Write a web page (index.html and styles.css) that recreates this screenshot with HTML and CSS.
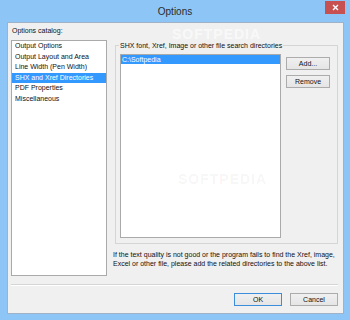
FILE: index.html
```html
<!DOCTYPE html>
<html>
<head>
<meta charset="utf-8">
<link rel="stylesheet" href="styles.css">
</head>
<body>
<div class="window">
  <div class="titlebar">
    <span></span>
    <span class="title">Options</span>
    <span class="close-wrap"><span class="close"><svg width="7" height="7" viewBox="0 0 7 7"><path d="M1 1L6 6M6 1L1 6" stroke="#fff" stroke-width="1.4"/></svg></span></span>
  </div>
  <div class="client">
    <div class="main">
      <div class="leftcol">
        <div class="label">Options catalog:</div>
        <ul class="catalog">
          <li>Output Options</li>
          <li>Output Layout and Area</li>
          <li>Line Width (Pen Width)</li>
          <li class="sel">SHX and Xref Directories</li>
          <li>PDF Properties</li>
          <li>Miscellaneous</li>
        </ul>
      </div>
      <div class="rightcol">
        <fieldset class="group">
          <legend>SHX font, Xref, Image or other file search directories</legend>
          <div class="grouprow">
            <ul class="dirs">
              <li class="sel">C:\Softpedia</li>
            </ul>
            <div class="sidebtns">
              <button class="btn side">Add...</button>
              <button class="btn side">Remove</button>
            </div>
          </div>
        </fieldset>
        <p class="desc">If the text quality is not good or the program fails to find the Xref, image, Excel or other file, please add the related directories to the above list.</p>
      </div>
    </div>
    <div class="sep"></div>
    <div class="footer">
      <button class="btn foot default">OK</button>
      <button class="btn foot">Cancel</button>
    </div>
    <div class="wm wm1">SOFTPEDIA</div>
    <div class="wm wm2">SOFTPEDIA</div>
  </div>
</div>
</body>
</html>
```

FILE: styles.css
```css
html, body {
  margin: 0;
  padding: 0;
}
body {
  width: 350px;
  height: 320px;
  background: #8dc6f6;
  font-family: "Liberation Sans", Arial, sans-serif;
  font-size: 7px;
  color: #111;
  overflow: hidden;
}
.window {
  display: flex;
  flex-direction: column;
  height: 320px;
}
.titlebar {
  height: 22px;
  display: grid;
  grid-template-columns: 1fr auto 1fr;
  align-items: start;
}
.title {
  font-size: 10px;
  color: #2b2b2b;
  line-height: 22px;
  margin-top: 1px;
}
.close-wrap {
  display: flex;
  justify-content: flex-end;
  padding-right: 5px;
  padding-top: 1px;
}
.close {
  width: 20px;
  height: 13px;
  background: #c75050;
  display: flex;
  align-items: center;
  justify-content: center;
}
.close svg { display: block; }
.client {
  position: relative;
  flex: 1;
  margin: 0 6px 6px 7px;
  background: #f0f0f0;
  border: 1px solid #9fb2c6;
  padding: 3px 5px 6px 3px;
  display: flex;
  flex-direction: column;
}
.main {
  display: flex;
  gap: 6px;
}
.leftcol {
  width: 96px;
  display: flex;
  flex-direction: column;
}
.label {
  line-height: 9px;
  padding-left: 1px;
  margin-bottom: 5px;
}
ul {
  list-style: none;
  margin: 0;
  padding: 0;
  background: #fff;
  border: 1px solid #aaaaaa;
  box-sizing: border-box;
}
.catalog {
  height: 236px;
}
.catalog li {
  line-height: 10.5px;
  height: 10.5px;
  padding-left: 3px;
  white-space: nowrap;
}
li.sel {
  background: #3399ff;
  color: #fff;
}
.rightcol {
  flex: 1;
  display: flex;
  flex-direction: column;
  padding-top: 15px;
}
.group {
  margin: 0 0 0 2px;
  border: 1px solid #d5d5d5;
  padding: 4px 7px 5px 4px;
  min-width: 0;
}
.group legend {
  padding: 0 1px;
  margin-left: -1px;
  line-height: 9px;
}
.grouprow {
  display: flex;
  gap: 5px;
}
.dirs {
  width: 161px;
  height: 184px;
}
.dirs li {
  height: 9px;
  line-height: 9px;
  padding-left: 1px;
}
.sidebtns {
  display: flex;
  flex-direction: column;
  gap: 5px;
  padding-top: 3px;
}
.btn {
  font-family: "Liberation Sans", Arial, sans-serif;
  font-size: 7px;
  color: #111;
  background: linear-gradient(#f0f0f0, #e5e5e5);
  border: 1px solid #acacac;
  padding: 0;
  margin: 0;
  line-height: 11px;
  box-sizing: border-box;
}
.side {
  width: 44px;
  height: 13px;
}
.desc {
  margin: 6px 0 0 0;
  line-height: 9px;
}
.sep {
  margin-top: 8px;
  height: 1px;
  background: #d5d5d5;
  border-bottom: 1px solid #fff;
}
.footer {
  display: flex;
  justify-content: flex-end;
  gap: 8px;
  margin-top: 7px;
}
.foot {
  width: 48px;
  height: 13px;
}
.default {
  border-color: #3c8ddb;
}
.wm {
  position: absolute;
  font-size: 14px;
  line-height: 12px;
  font-weight: bold;
  letter-spacing: 1px;
  pointer-events: none;
}
.wm1 {
  left: 164px;
  top: 5px;
  color: rgba(255,255,255,0.6);
}
.wm2 {
  left: 170px;
  top: 150px;
  color: rgba(0,0,0,0.05);
}
```
